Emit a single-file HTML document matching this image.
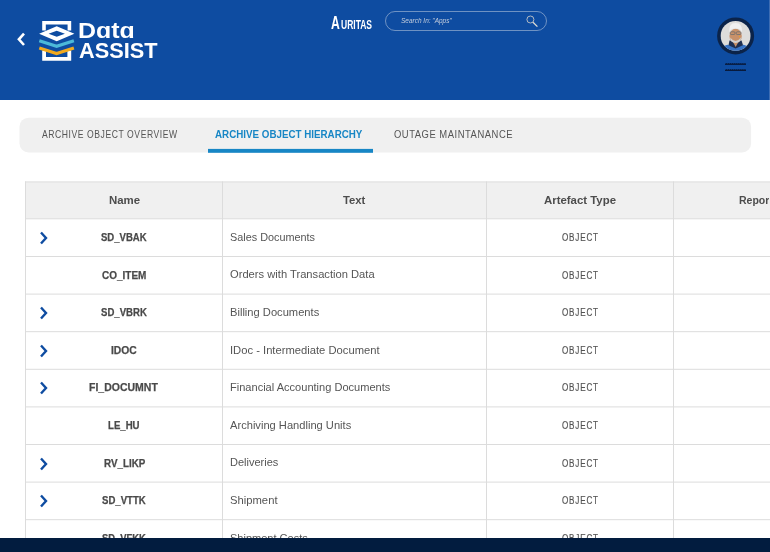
<!DOCTYPE html>
<html><head><meta charset="utf-8">
<style>
*{box-sizing:border-box;margin:0;padding:0}
html,body{width:770px;height:552px;overflow:hidden;background:#fff;font-family:"Liberation Sans",sans-serif}
.a{position:absolute;white-space:nowrap;line-height:1;transform-origin:0 0}
.hdr{position:absolute;left:0;top:0;width:770px;height:100px;background:linear-gradient(to right,#0e4ca1 769px,#3d6db3 769px);overflow:hidden}
.tabs{position:absolute;left:19px;top:117px;width:732px;height:35px;background:#f0f0f0;border-radius:8px}
.ul{position:absolute;left:208px;top:149px;width:165px;height:4px;background:#1786c5}
.tbl{position:absolute;left:25px;top:182px;width:745px;height:356px;overflow:hidden}
.th{position:absolute;left:0;top:0;width:745px;height:37px;background:#f0f0f0}
.hl{position:absolute;left:0;width:745px;height:1px;background:#dedede}
.vl{position:absolute;top:0;width:1px;height:356px;background:#dedede}
.tab{font-size:9.8px;color:#555}
.thd{font-size:11.4px;font-weight:bold;color:#4d4d4d}
.nm{font-size:10.3px;font-weight:bold;color:#4a4a4a}
.tx{font-size:11px;color:#555}
.ob{font-size:11px;color:#555}
.foot{position:absolute;left:0;top:538px;width:770px;height:14px;background:#021c3f}
</style></head><body>
<div class="hdr">
  <!-- back chevron -->
  <svg class="a" style="left:14px;top:31px" width="14" height="18" viewBox="0 0 14 18"><path d="M10 2.6 L4.9 8.3 L10 14" stroke="#fff" stroke-width="2.6" fill="none"/></svg>
  <!-- logo icon -->
  <svg class="a" style="left:35px;top:15px" width="45" height="50" viewBox="35 15 45 50">
    <path d="M42.2 30.6 V20.9 H71.2 V30.6 H67.6 V24.5 H45.8 V30.6 Z" fill="#fff"/>
    <path d="M42.2 50.6 V60.7 H71.2 V50.6 H67.4 V56.9 H46 V50.6 Z" fill="#fff"/>
    <path fill-rule="evenodd" d="M39.1 33.8 L56.7 26.3 L74.4 33.8 L56.7 41.3 Z M48.6 33.8 L56.7 30.85 L64.9 33.8 L56.7 36.7 Z" fill="#fff"/>
    <path d="M39.3 40.7 L56.6 46.3 L73.9 40.7" fill="none" stroke="#4cb9d9" stroke-width="3.1"/>
    <path d="M39.3 48 L56.6 53.5 L73.9 48" fill="none" stroke="#f2aa1f" stroke-width="3.1"/>
  </svg>
      <!-- Auritas -->
    <!-- search -->
  <div class="a" style="left:385px;top:11px;width:162px;height:20px;border:1px solid rgba(205,215,230,0.5);border-radius:10px"></div>
    <svg class="a" style="left:524px;top:13px" width="16" height="16" viewBox="524 13 16 16"><circle cx="530.4" cy="19.5" r="3.5" fill="none" stroke="#d8d4cc" stroke-width="0.8"/><path d="M533 22.3 L537.4 26.6" stroke="#e0ddd5" stroke-width="1.3"/></svg>
  <!-- avatar -->
  <svg class="a" style="left:716px;top:16px" width="40" height="40" viewBox="0 0 40 40">
    <defs><clipPath id="cp"><circle cx="19.6" cy="19.9" r="14.9"/></clipPath></defs>
    <circle cx="19.6" cy="19.9" r="18.5" fill="#0b2349"/>
    <g clip-path="url(#cp)">
      <rect x="0" y="0" width="40" height="40" fill="#dedddb"/>
      <path d="M2 40 Q4 30.5 11.5 28.8 L19.6 31 L27.5 28.8 Q35 30.5 37 40 Z" fill="#3673c6"/>
      <path d="M12.5 29.2 L19.6 32.5 L27 29.2 L25.5 24.5 L13.5 24.5 Z" fill="#1d2f52"/>
      <path d="M17 26 L19.6 31 L22.5 26 Z" fill="#c8916a"/>
      <ellipse cx="19.6" cy="20" rx="6.2" ry="7.2" fill="#c8916a"/>
      <path d="M13.2 16.5 Q12.3 7 19.6 7 Q26.9 7 26 16.5 Q25 12.2 19.6 12.4 Q14.2 12.2 13.2 16.5 Z" fill="#f0f0f0"/>
      <rect x="14.3" y="15.8" width="4.6" height="2.7" rx="0.8" fill="none" stroke="#6e6e6e" stroke-width="0.8"/>
      <rect x="20.3" y="15.8" width="4.6" height="2.7" rx="0.8" fill="none" stroke="#6e6e6e" stroke-width="0.8"/>
      <path d="M14.2 21.5 Q19.6 28.5 25 21.5 L24.4 25 Q19.6 28.8 14.8 25 Z" fill="#d0d0d0"/>
      <circle cx="23.5" cy="20.6" r="0.6" fill="#f2a020"/>
    </g>
  </svg>
  <svg class="a" style="left:0;top:0" width="770" height="100" viewBox="0 0 770 100"><g fill="#081a3c"><rect x="725" y="63.6" width="21" height="1.3"/><rect x="725" y="69.7" width="21" height="1.3"/><path d="M725.60 63.9 l0.9 -1 l0.9 1 Z M727.65 63.9 l0.9 -1 l0.9 1 Z M729.70 63.9 l0.9 -1 l0.9 1 Z M731.75 63.9 l0.9 -1 l0.9 1 Z M733.80 63.9 l0.9 -1 l0.9 1 Z M735.85 63.9 l0.9 -1 l0.9 1 Z M737.90 63.9 l0.9 -1 l0.9 1 Z M739.95 63.9 l0.9 -1 l0.9 1 Z M742.00 63.9 l0.9 -1 l0.9 1 Z M744.05 63.9 l0.9 -1 l0.9 1 Z M725.60 70 l0.9 -1 l0.9 1 Z M727.65 70 l0.9 -1 l0.9 1 Z M729.70 70 l0.9 -1 l0.9 1 Z M731.75 70 l0.9 -1 l0.9 1 Z M733.80 70 l0.9 -1 l0.9 1 Z M735.85 70 l0.9 -1 l0.9 1 Z M737.90 70 l0.9 -1 l0.9 1 Z M739.95 70 l0.9 -1 l0.9 1 Z M742.00 70 l0.9 -1 l0.9 1 Z M744.05 70 l0.9 -1 l0.9 1 Z "/></g></svg>
  
</div>

<svg class="a" style="left:0;top:100px" width="770" height="60" viewBox="0 100 770 60"><rect x="19.5" y="117.7" width="731.6" height="34.7" rx="9" fill="#f0f0f0"/><rect x="208" y="148.9" width="165" height="3.9" fill="#1786c5"/></svg>


<svg class="a" style="left:0;top:0" width="770" height="552" viewBox="0 0 770 552">
  <rect x="25" y="181.9" width="745" height="36.9" fill="#f0f0f0"/>
  <g stroke="#dcdcdc" stroke-width="1"><line x1="25" y1="181.90" x2="770" y2="181.90"/><line x1="25" y1="218.80" x2="770" y2="218.80"/><line x1="25" y1="256.50" x2="770" y2="256.50"/><line x1="25" y1="294.10" x2="770" y2="294.10"/><line x1="25" y1="331.70" x2="770" y2="331.70"/><line x1="25" y1="369.30" x2="770" y2="369.30"/><line x1="25" y1="406.90" x2="770" y2="406.90"/><line x1="25" y1="444.50" x2="770" y2="444.50"/><line x1="25" y1="482.10" x2="770" y2="482.10"/><line x1="25" y1="519.70" x2="770" y2="519.70"/><line x1="25.5" y1="181.4" x2="25.5" y2="538"/><line x1="222.5" y1="181.4" x2="222.5" y2="538"/><line x1="486.5" y1="181.4" x2="486.5" y2="538"/><line x1="673.5" y1="181.4" x2="673.5" y2="538"/></g>
</svg>


<div class="a" style="left:215.00px;top:128.68px;font-size:10.89px;font-weight:bold;color:#1786c5;transform:scaleX(0.900)">ARCHIVE OBJECT HIERARCHY</div>
<div class="a" style="left:77.76px;top:20.44px;font-size:21.93px;font-weight:bold;color:#fff;transform:scaleX(1.139)">Dɑtɑ</div>
<div class="a" style="left:79.30px;top:40.22px;font-size:22.07px;font-weight:bold;color:#fff;transform:scaleX(0.984)">ASSIST</div>
<div class="a" style="left:400.80px;top:16.95px;font-size:7.26px;font-style:italic;color:#c4cddc;transform:scaleX(0.894)">Search In: "Apps"</div>
<div class="a" style="left:330.50px;top:13.76px;font-size:18.72px;font-weight:bold;color:#fff;transform:scaleX(0.650)">A</div>
<div class="a" style="left:340.60px;top:18.00px;font-size:12.99px;font-weight:bold;color:#fff;transform:scaleX(0.655)">URITAS</div>
<svg class="a" style="left:38px;top:231.0px" width="12" height="14" viewBox="0 0 12 14"><path d="M3 1.5 L8 7 L3 12.5" stroke="#0e4ca1" stroke-width="2.4" fill="none"/></svg>
<svg class="a" style="left:38px;top:306.2px" width="12" height="14" viewBox="0 0 12 14"><path d="M3 1.5 L8 7 L3 12.5" stroke="#0e4ca1" stroke-width="2.4" fill="none"/></svg>
<svg class="a" style="left:38px;top:343.8px" width="12" height="14" viewBox="0 0 12 14"><path d="M3 1.5 L8 7 L3 12.5" stroke="#0e4ca1" stroke-width="2.4" fill="none"/></svg>
<svg class="a" style="left:38px;top:381.4px" width="12" height="14" viewBox="0 0 12 14"><path d="M3 1.5 L8 7 L3 12.5" stroke="#0e4ca1" stroke-width="2.4" fill="none"/></svg>
<svg class="a" style="left:38px;top:456.6px" width="12" height="14" viewBox="0 0 12 14"><path d="M3 1.5 L8 7 L3 12.5" stroke="#0e4ca1" stroke-width="2.4" fill="none"/></svg>
<svg class="a" style="left:38px;top:494.2px" width="12" height="14" viewBox="0 0 12 14"><path d="M3 1.5 L8 7 L3 12.5" stroke="#0e4ca1" stroke-width="2.4" fill="none"/></svg>
<div class="a" style="left:0;top:0;width:769px;height:552px;overflow:hidden;filter:grayscale(1)">
<div class="a" style="left:42.00px;top:128.68px;font-size:10.89px;letter-spacing:0.7px;color:#555;transform:scaleX(0.791)">ARCHIVE OBJECT OVERVIEW</div>
<div class="a" style="left:393.70px;top:128.68px;font-size:10.89px;letter-spacing:0.6px;color:#555;transform:scaleX(0.867)">OUTAGE MAINTANANCE</div>
<div class="a" style="left:108.80px;top:194.54px;font-size:11.17px;font-weight:bold;color:#4d4d4d;transform:scaleX(1.024)">Name</div>
<div class="a" style="left:343.20px;top:194.54px;font-size:11.17px;font-weight:bold;color:#4d4d4d;transform:scaleX(1.009)">Text</div>
<div class="a" style="left:544.00px;top:194.54px;font-size:11.17px;font-weight:bold;color:#4d4d4d;transform:scaleX(1.022)">Artefact Type</div>
<div class="a" style="left:100.90px;top:232.00px;font-size:10.75px;font-weight:bold;-webkit-text-stroke:0.25px #4a4a4a;color:#4a4a4a;transform:scaleX(0.889)">SD_VBAK</div>
<div class="a" style="left:230.20px;top:231.80px;font-size:10.75px;color:#555;transform:scaleX(1.009)">Sales Documents</div>
<div class="a" style="left:561.80px;top:232.02px;font-size:11.31px;letter-spacing:1.1px;-webkit-text-stroke:0.2px #555;color:#555;transform:scaleX(0.720)">OBJECT</div>
<div class="a" style="left:101.90px;top:269.60px;font-size:10.75px;font-weight:bold;-webkit-text-stroke:0.25px #4a4a4a;color:#4a4a4a;transform:scaleX(0.928)">CO_ITEM</div>
<div class="a" style="left:230.20px;top:269.40px;font-size:10.75px;color:#555;transform:scaleX(1.039)">Orders with Transaction Data</div>
<div class="a" style="left:561.80px;top:269.62px;font-size:11.31px;letter-spacing:1.1px;-webkit-text-stroke:0.2px #555;color:#555;transform:scaleX(0.720)">OBJECT</div>
<div class="a" style="left:100.80px;top:307.20px;font-size:10.75px;font-weight:bold;-webkit-text-stroke:0.25px #4a4a4a;color:#4a4a4a;transform:scaleX(0.893)">SD_VBRK</div>
<div class="a" style="left:230.20px;top:307.00px;font-size:10.75px;color:#555;transform:scaleX(1.037)">Billing Documents</div>
<div class="a" style="left:561.80px;top:307.22px;font-size:11.31px;letter-spacing:1.1px;-webkit-text-stroke:0.2px #555;color:#555;transform:scaleX(0.720)">OBJECT</div>
<div class="a" style="left:111.30px;top:344.80px;font-size:10.75px;font-weight:bold;-webkit-text-stroke:0.25px #4a4a4a;color:#4a4a4a;transform:scaleX(0.959)">IDOC</div>
<div class="a" style="left:230.20px;top:344.60px;font-size:10.75px;color:#555;transform:scaleX(1.043)">IDoc - Intermediate Document</div>
<div class="a" style="left:561.80px;top:344.82px;font-size:11.31px;letter-spacing:1.1px;-webkit-text-stroke:0.2px #555;color:#555;transform:scaleX(0.720)">OBJECT</div>
<div class="a" style="left:89.40px;top:382.40px;font-size:10.75px;font-weight:bold;-webkit-text-stroke:0.25px #4a4a4a;color:#4a4a4a;transform:scaleX(0.977)">FI_DOCUMNT</div>
<div class="a" style="left:230.20px;top:382.20px;font-size:10.75px;color:#555;transform:scaleX(1.028)">Financial Accounting Documents</div>
<div class="a" style="left:561.80px;top:382.42px;font-size:11.31px;letter-spacing:1.1px;-webkit-text-stroke:0.2px #555;color:#555;transform:scaleX(0.720)">OBJECT</div>
<div class="a" style="left:108.10px;top:420.00px;font-size:10.75px;font-weight:bold;-webkit-text-stroke:0.25px #4a4a4a;color:#4a4a4a;transform:scaleX(0.896)">LE_HU</div>
<div class="a" style="left:230.20px;top:419.80px;font-size:10.75px;color:#555;transform:scaleX(1.035)">Archiving Handling Units</div>
<div class="a" style="left:561.80px;top:420.02px;font-size:11.31px;letter-spacing:1.1px;-webkit-text-stroke:0.2px #555;color:#555;transform:scaleX(0.720)">OBJECT</div>
<div class="a" style="left:103.70px;top:457.60px;font-size:10.75px;font-weight:bold;-webkit-text-stroke:0.25px #4a4a4a;color:#4a4a4a;transform:scaleX(0.913)">RV_LIKP</div>
<div class="a" style="left:230.20px;top:457.40px;font-size:10.75px;color:#555;transform:scaleX(1.025)">Deliveries</div>
<div class="a" style="left:561.80px;top:457.62px;font-size:11.31px;letter-spacing:1.1px;-webkit-text-stroke:0.2px #555;color:#555;transform:scaleX(0.720)">OBJECT</div>
<div class="a" style="left:102.00px;top:495.20px;font-size:10.75px;font-weight:bold;-webkit-text-stroke:0.25px #4a4a4a;color:#4a4a4a;transform:scaleX(0.894)">SD_VTTK</div>
<div class="a" style="left:229.80px;top:495.00px;font-size:10.75px;color:#555;transform:scaleX(1.046)">Shipment</div>
<div class="a" style="left:561.80px;top:495.22px;font-size:11.31px;letter-spacing:1.1px;-webkit-text-stroke:0.2px #555;color:#555;transform:scaleX(0.720)">OBJECT</div>
<div class="a" style="left:102.00px;top:532.80px;font-size:10.75px;font-weight:bold;-webkit-text-stroke:0.25px #4a4a4a;color:#4a4a4a;transform:scaleX(0.873)">SD_VFKK</div>
<div class="a" style="left:229.80px;top:532.60px;font-size:10.75px;color:#555;transform:scaleX(1.025)">Shipment Costs</div>
<div class="a" style="left:561.80px;top:532.82px;font-size:11.31px;letter-spacing:1.1px;-webkit-text-stroke:0.2px #555;color:#555;transform:scaleX(0.720)">OBJECT</div>
<div class="a" style="left:738.80px;top:194.54px;font-size:11.17px;font-weight:bold;color:#4d4d4d;transform:scaleX(0.943)">Report</div>
</div>
<div class="foot"></div>
</body></html>
